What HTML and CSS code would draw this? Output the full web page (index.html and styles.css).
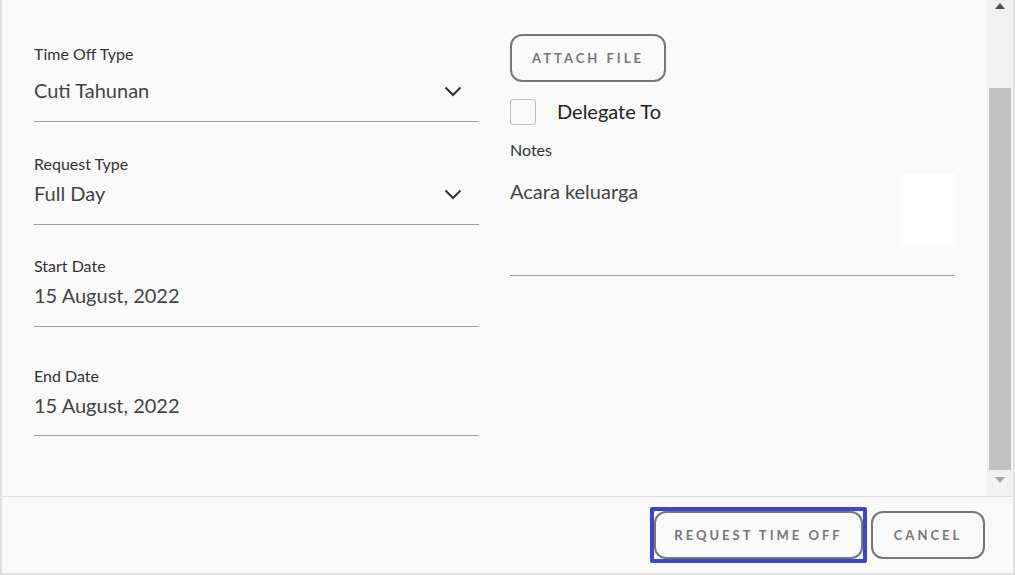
FILE: index.html
```html
<!DOCTYPE html>
<html>
<head>
<meta charset="utf-8">
<link rel="stylesheet" href="styles.css">
</head>
<body>
<div class="dialog">
  <div class="body">
    <div class="content">
      <div class="col col-left">
        <div class="field f1">
          <div class="label">Time Off Type</div>
          <div class="value select v1">
            <span>Cuti Tahunan</span>
            <svg class="chev" width="18" height="11" viewBox="0 0 18 11"><path d="M1.5 1.5 L9 9 L16.5 1.5" fill="none" stroke="#333" stroke-width="2"/></svg>
          </div>
        </div>
        <div class="field f2">
          <div class="label">Request Type</div>
          <div class="value select">
            <span>Full Day</span>
            <svg class="chev" width="18" height="11" viewBox="0 0 18 11"><path d="M1.5 1.5 L9 9 L16.5 1.5" fill="none" stroke="#333" stroke-width="2"/></svg>
          </div>
        </div>
        <div class="field f3">
          <div class="label">Start Date</div>
          <div class="value"><span>15 August, 2022</span></div>
        </div>
        <div class="field f4">
          <div class="label">End Date</div>
          <div class="value v4"><span>15 August, 2022</span></div>
        </div>
      </div>
      <div class="col col-right">
        <button class="btn attach">ATTACH FILE</button>
        <label class="check-row">
          <span class="checkbox"></span>
          <span class="check-text">Delegate To</span>
        </label>
        <div class="label notes-label">Notes</div>
        <div class="notes">
          <span class="notes-text">Acara keluarga</span>
          <span class="notes-box"></span>
        </div>
      </div>
    </div>
    <div class="scrollbar">
      <div class="arrow up"></div>
      <div class="track"><div class="thumb"></div></div>
      <div class="arrow down"></div>
    </div>
  </div>
  <div class="footer">
    <span class="focus-ring"><button class="btn request">REQUEST TIME OFF</button></span>
    <button class="btn cancel">CANCEL</button>
  </div>
</div>
</body>
</html>
```
FILE: styles.css
```css
html, body {
  margin: 0;
  padding: 0;
  background: #fafafa;
}
body {
  font-family: Lato, "Open Sans", sans-serif;
}
.dialog {
  width: 1015px;
  height: 575px;
  box-sizing: border-box;
  border-left: 2px solid #e2e2e2;
  border-right: 2px solid #e2e2e2;
  border-bottom: 2px solid #e2e2e2;
  background: #fafafa;
  display: flex;
  flex-direction: column;
}
.body {
  height: 496px;
  display: flex;
  border-bottom: 1px solid #e0e0e0;
}
.content {
  flex: 1;
  display: flex;
  gap: 31px;
  padding-left: 32px;
  padding-right: 32px;
}
.col {
  width: 445px;
}
.label {
  font-size: 16px;
  line-height: 18px;
  color: #333;
}
.value {
  font-size: 20px;
  line-height: 24px;
  color: #444;
  margin-top: 8px;
  padding-bottom: 19px;
  border-bottom: 1px solid #9e9e9e;
  display: flex;
  align-items: center;
  justify-content: space-between;
}
.select {
  padding-right: 17px;
}
.chev {
  display: block;
  margin-top: 3px;
}
.f1 { margin-top: 45px; }
.v1 { margin-top: 15px; }
.f2 { margin-top: 33px; }
.f3 { margin-top: 32px; }
.f4 { margin-top: 40px; }
.v4 { padding-bottom: 18px; }

.col-right {
  padding-top: 34px;
  display: flex;
  flex-direction: column;
  align-items: flex-start;
}
.btn {
  font-family: Lato, "Open Sans", sans-serif;
  font-weight: 700;
  font-size: 13px;
  letter-spacing: 3px;
  color: #777;
  background: #fafafa;
  border: 2px solid #777;
  border-radius: 12px;
  height: 48px;
  box-sizing: border-box;
  padding: 0;
  cursor: pointer;
}
.attach {
  width: 156px;
}
.check-row {
  margin-top: 17px;
  display: flex;
  align-items: center;
  gap: 21px;
}
.checkbox {
  width: 26px;
  height: 26px;
  box-sizing: border-box;
  border: 1px solid #bdbdbd;
  border-radius: 3px;
  background: #fafafa;
}
.check-text {
  font-size: 20px;
  line-height: 24px;
  color: #222;
  margin-top: -2px;
}
.notes-label {
  margin-top: 16px;
}
.notes {
  align-self: stretch;
  margin-top: 15px;
  display: flex;
  justify-content: space-between;
  padding-bottom: 28px;
  border-bottom: 1px solid #9e9e9e;
}
.notes-text {
  padding-top: 5px;
  font-size: 20px;
  line-height: 24px;
  color: #444;
}
.notes-box {
  width: 53px;
  height: 73px;
  background: #ffffff;
}

.scrollbar {
  width: 26px;
  background: #f1f1f1;
  display: flex;
  flex-direction: column;
  align-items: center;
}
.arrow {
  width: 0;
  height: 0;
  border-left: 5px solid transparent;
  border-right: 5px solid transparent;
}
.arrow.up {
  margin-top: 3px;
  border-bottom: 6px solid #505050;
}
.arrow.down {
  margin-top: 7px;
  border-top: 6px solid #a3a3a3;
}
.track {
  width: 100%;
  height: 461px;
  padding-top: 79px;
  box-sizing: border-box;
  display: flex;
  justify-content: center;
}
.thumb {
  width: 22px;
  height: 382px;
  background: #c1c1c1;
}

.footer {
  flex: 1;
  display: flex;
  align-items: center;
  justify-content: flex-end;
  padding-right: 28px;
  gap: 4px;
}
.focus-ring {
  display: inline-flex;
  border: 4px solid #3d45c9;
  border-radius: 2px;
}
.request {
  width: 209px;
}
.cancel {
  width: 114px;
}
```
